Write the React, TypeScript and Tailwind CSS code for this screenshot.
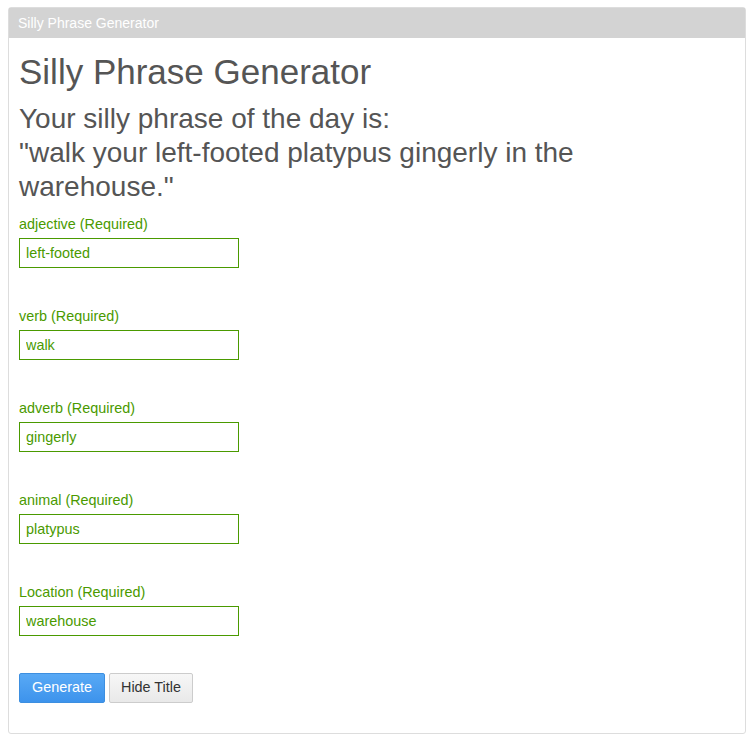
const fields = [
  { label: 'adjective', value: 'left-footed' },
  { label: 'verb', value: 'walk' },
  { label: 'adverb', value: 'gingerly' },
  { label: 'animal', value: 'platypus' },
  { label: 'Location', value: 'warehouse' },
];

export default function App() {
  return (
    <div className="px-2 pt-[7px] pb-2 font-['Liberation_Sans',Arial,sans-serif] text-[#555]">
      <div className="border border-[#ddd] rounded-[3px] bg-white">
        <div className="h-[30px] bg-[#d3d3d3] px-[9px] flex items-center text-[14px] text-white">
          Silly Phrase Generator
        </div>
        <div className="px-[10px] pt-[13px] pb-[30px]">
          <h1 className="text-[35px] leading-[42px] text-[#555]">Silly Phrase Generator</h1>
          <h2 className="mt-[9px] text-[28px] leading-[34px] text-[#555]">
            Your silly phrase of the day is:
            <br />
            "walk your left-footed platypus gingerly in the
            <br />
            warehouse."
          </h2>
          <div className="mt-[11px]">
            {fields.map((f) => (
              <div key={f.label} className="mb-[39px] text-[14.4px] text-[#4a9a00]">
                <label className="block leading-[18px] mb-[5px]">{f.label} (Required)</label>
                <input
                  readOnly
                  value={f.value}
                  className="w-[220px] h-[30px] border border-[#4a9a00] px-[6px] text-[14.4px] text-[#4a9a00] outline-none"
                />
              </div>
            ))}
          </div>
          <div className="flex gap-[4px] -mt-[2px]">
            <button className="h-[30px] px-[12px] text-[14.4px] text-white rounded-[2px] border border-[#3d8fe0] bg-gradient-to-b from-[#58a9f5] to-[#3d93ec]">
              Generate
            </button>
            <button className="h-[30px] px-[11px] text-[14.4px] text-[#333] rounded-[2px] border border-[#ccc] bg-gradient-to-b from-[#f7f7f7] to-[#e9e9e9]">
              Hide Title
            </button>
          </div>
        </div>
      </div>
    </div>
  );
}
